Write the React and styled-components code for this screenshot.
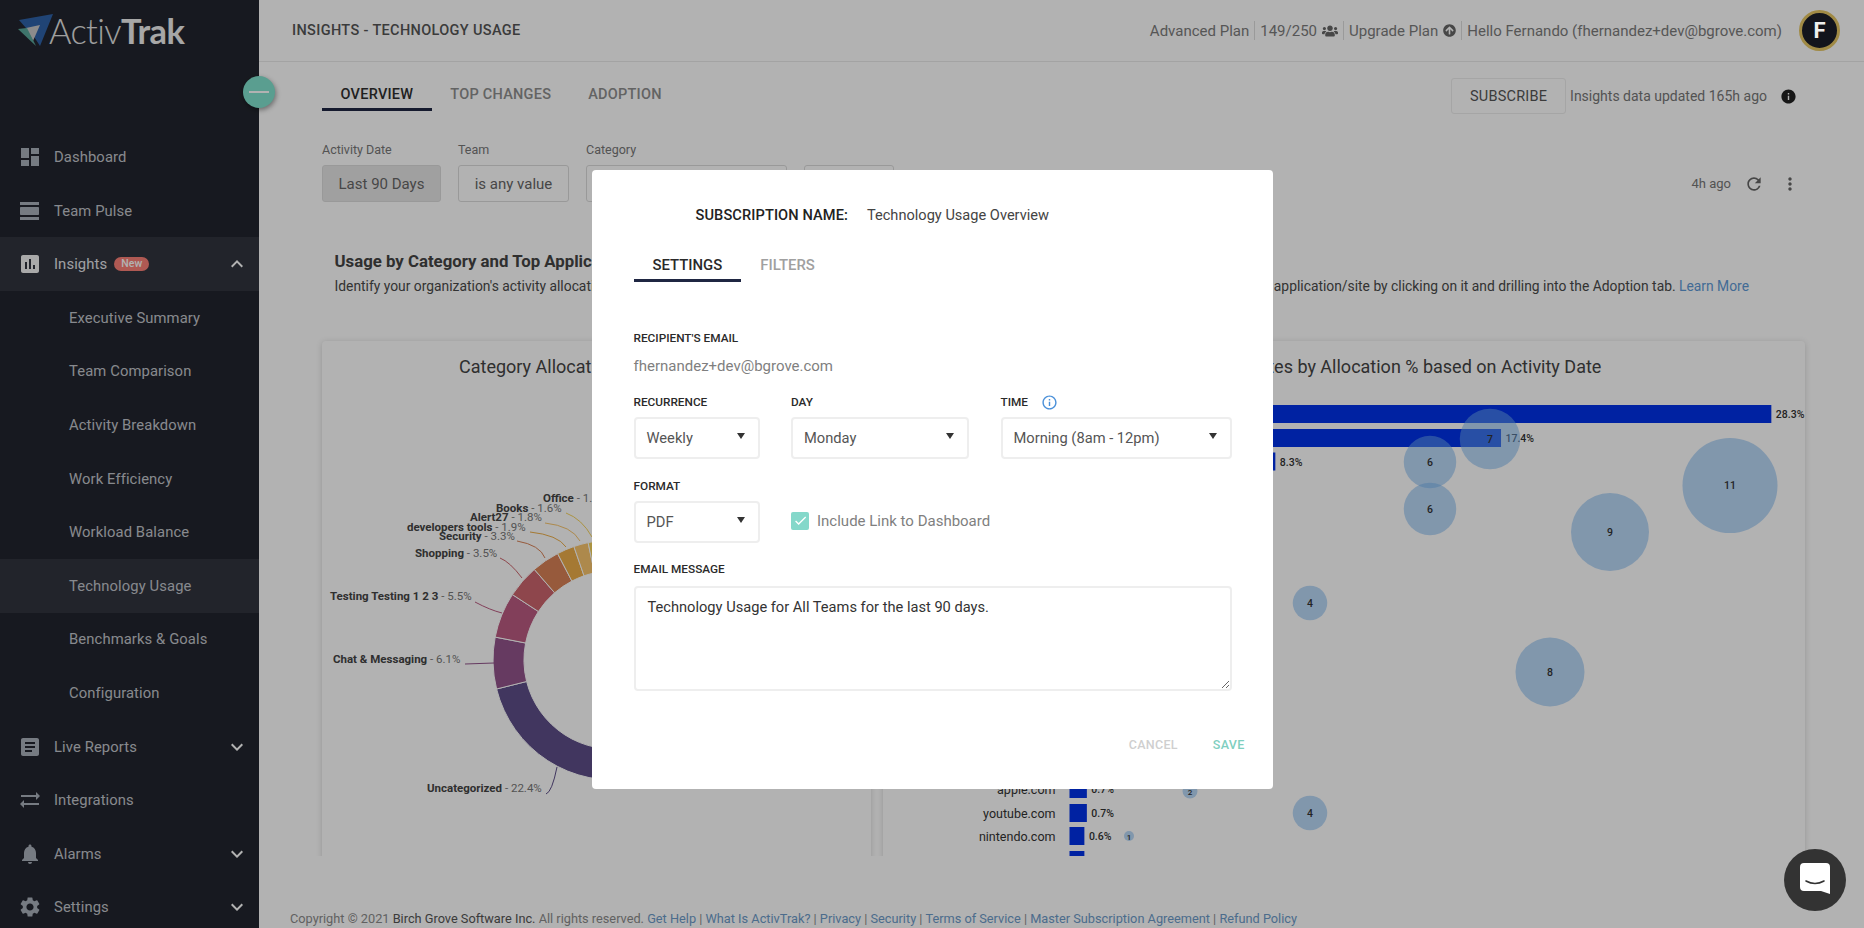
import React from 'react';
import styled, { createGlobalStyle } from 'styled-components';
import {
  MdDashboard, MdViewDay, MdInsertChart, MdArticle, MdSyncAlt, MdNotifications, MdSettings,
  MdExpandLess, MdExpandMore, MdInfo, MdRefresh, MdMoreVert, MdInfoOutline, MdCheck,
} from 'react-icons/md';
import { FaUsers, FaArrowCircleUp } from 'react-icons/fa';

const GlobalStyle = createGlobalStyle`
  html, body { margin: 0; height: 100%; overflow: hidden; }
  body { font-family: Roboto, "Liberation Sans", sans-serif; background: #fff; }
  * { box-sizing: border-box; }
`;

const Page = styled.div`
  display: flex;
  height: 928px;
  overflow: hidden;
`;

const Sidebar = styled.aside`
  position: relative;
  flex: 0 0 259px;
  background: #22252e;
  overflow: visible;
`;

const LogoWrap = styled.div`
  display: flex;
  align-items: flex-start;
  height: 130.25px;
  padding: 9px 0 0 18px;
`;

const LogoMark = styled.svg`
  width: 36px;
  height: 34px;
  margin-top: 4px;
  flex: none;
`;

const LogoText = styled.div`
  margin: 0 0 0 -5px;
  font-family: Lato, Roboto, sans-serif;
  font-size: 34.4px;
  line-height: 44px;
  letter-spacing: -0.6px;
  font-weight: 300;
  color: #e4e4e4;
  b { font-weight: 700; color: #f0f0f0; }
`;

const Toggle = styled.div`
  position: absolute;
  top: 76px;
  right: -16px;
  width: 32px;
  height: 32px;
  border-radius: 50%;
  background: #81e2ce;
  box-shadow: 1px 2px 5px rgba(0, 0, 0, 0.4);
  display: flex;
  align-items: center;
  justify-content: center;
  z-index: 2;
  &::after {
    content: '';
    width: 20px;
    height: 2px;
    background: #fff;
  }
`;

const NavItem = styled.div`
  display: flex;
  align-items: center;
  height: 53.6px;
  padding: 0 10px 0 ${(p) => (p.$sub ? '69px' : '20px')};
  background: ${(p) => (p.$active ? '#31343e' : 'transparent')};
  color: ${(p) => (p.$bright ? '#e4e6ea' : '#c2c5cc')};
  font-size: 14.8px;
  letter-spacing: 0.1px;
  svg { flex: none; }
`;

const NavIcon = styled.span`
  display: flex;
  width: 34px;
  margin-left: -2px;
  margin-right: 2px;
  font-size: 24px;
  color: ${(p) => (p.$bright ? '#f2f2f2' : '#aab0bb')};
`;

const NewBadge = styled.span`
  margin-left: 7px;
  padding: 0 7px;
  height: 14px;
  line-height: 14px;
  border-radius: 7px;
  background: #fb8077;
  color: #fff;
  font-size: 10.5px;
  font-weight: 500;
`;

const Chevron = styled.span`
  display: flex;
  margin-left: auto;
  font-size: 24px;
  color: #fff;
`;

const Main = styled.main`
  flex: 1;
  min-width: 0;
  display: flex;
  flex-direction: column;
  background: #fff;
`;

const Header = styled.header`
  display: flex;
  align-items: center;
  height: 62px;
  padding: 0 24px 0 33px;
  border-bottom: 1px solid #eaeaea;
`;

const PageTitle = styled.div`
  font-size: 14.5px;
  font-weight: 500;
  color: #555;
  letter-spacing: 0.35px;
`;

const HeaderRight = styled.div`
  margin-left: auto;
  display: flex;
  align-items: center;
  font-size: 15px;
  color: #7c7c7c;
`;

const HeaderCell = styled.span`
  display: flex;
  align-items: center;
  gap: 5px;
  height: 19px;
  padding: 0 5px;
  border-left: ${(p) => (p.$first ? 'none' : '1px solid #ddd')};
  svg { font-size: ${(p) => p.$icon || 14}px; color: #666; }
`;

const Avatar = styled.div`
  position: relative;
  z-index: 30;
  margin-left: 12px;
  width: 41px;
  height: 41px;
  border-radius: 50%;
  border: 3px solid #a08a45;
  background: #12141c;
  color: #eee;
  display: flex;
  align-items: center;
  justify-content: center;
  font-size: 22px;
  font-weight: 700;
`;

const Content = styled.div`
  padding: 16px 59px 0 63px;
`;

const TabsRow = styled.div`
  display: flex;
  align-items: flex-start;
  height: 36px;
`;

const Tab = styled.div`
  height: 33px;
  padding: 0 18.5px;
  line-height: 33px;
  font-size: 14.5px;
  font-weight: 500;
  letter-spacing: 0.25px;
  color: ${(p) => (p.$active ? '#2f2f2f' : '#8e8e8e')};
  border-bottom: 3px solid ${(p) => (p.$active ? '#1f2642' : 'transparent')};
`;

const SubscribeWrap = styled.div`
  margin-left: auto;
  display: flex;
  align-items: center;
  gap: 4px;
  padding-right: 8.5px;
  font-size: 14px;
  color: #777;
  svg { margin-left: 8.5px; font-size: 17px; color: #222; }
`;

const SubscribeButton = styled.div`
  width: 115px;
  height: 36px;
  display: flex;
  align-items: center;
  justify-content: center;
  border: 1px solid #ececec;
  border-radius: 3px;
  font-size: 14.5px;
  letter-spacing: 0.2px;
  color: #555;
`;

const FilterRow = styled.div`
  display: flex;
  align-items: flex-end;
  gap: 17px;
  margin-top: 29px;
`;

const FilterGroup = styled.div`
  display: flex;
  flex-direction: column;
  gap: 8px;
`;

const FilterLabel = styled.div`
  font-size: 12.5px;
  line-height: 14px;
  color: #777;
`;

const Chip = styled.div`
  width: ${(p) => p.$w}px;
  height: 37px;
  display: flex;
  align-items: center;
  justify-content: center;
  font-size: 15px;
  color: #666;
  border: 1px solid #dcdcdc;
  border-radius: 3px;
  background: ${(p) => (p.$on ? '#e6e6e6' : '#fff')};
`;

const FilterTools = styled.div`
  margin-left: auto;
  height: 37px;
  display: flex;
  align-items: center;
  padding-right: 5px;
  font-size: 13px;
  color: #777;
  svg { font-size: 20px; color: #666; }
`;

const ToolGap = styled.span`
  display: flex;
  margin-left: ${(p) => p.$gap}px;
`;

const SectionTitle = styled.h2`
  margin: 49px 0 0 12.5px;
  font-size: 16.8px;
  line-height: 20px;
  font-weight: 700;
  color: #444;
`;

const SectionDesc = styled.div`
  display: flex;
  justify-content: space-between;
  margin: 6px 56px 0 12.5px;
  font-size: 13.85px;
  line-height: 18px;
  color: #4a4a4a;
  a { color: #5f9ad6; text-decoration: none; }
`;

const CardsClip = styled.div`
  display: grid;
  grid-template-columns: 549px 922px;
  gap: 12px;
  height: 523px;
  margin: 38px -8px 0 -8px;
  padding: 8px 8px 0;
  overflow: hidden;
`;

const Card = styled.section`
  background: #fff;
  border-radius: 4px;
  box-shadow: 0 1px 6px rgba(0, 0, 0, 0.16);
  height: 530px;
`;

const CardTitle = styled.h3`
  margin: 0;
  padding: 15px 0 0 ${(p) => p.$inset || 0}px;
  text-align: center;
  font-size: 18px;
  line-height: 22px;
  font-weight: 400;
  color: #444;
`;

const ChartSvg = styled.svg`
  display: block;
`;

const LabelText = styled.text`
  font-family: Roboto, sans-serif;
  font-size: 11.5px;
  font-weight: 700;
  fill: #444;
  tspan { font-weight: 400; fill: #777; }
`;

const BarText = styled.text`
  font-family: Roboto, sans-serif;
  font-size: ${(p) => p.$size || 10.5}px;
  font-weight: ${(p) => p.$weight || 500};
  fill: #333;
`;

const Footer = styled.footer`
  margin-top: auto;
  padding-left: 31px;
  line-height: 18px;
  font-size: 12.75px;
  color: #8c8c8c;
  white-space: nowrap;
  b { font-weight: 400; color: #555; }
  a { color: #6d9bc9; text-decoration: none; }
`;

const Overlay = styled.div`
  position: fixed;
  inset: 0;
  z-index: 10;
  display: flex;
  justify-content: center;
  align-items: flex-start;
  padding-top: 170px;
  background: rgba(0, 0, 0, 0.3);
`;

const Modal = styled.div`
  width: 681px;
  height: 619px;
  padding: 35px 28px 0 42px;
  background: #fff;
  border-radius: 4px;
  display: flex;
  flex-direction: column;
`;

const NameRow = styled.div`
  display: flex;
  align-items: center;
  gap: 19px;
  height: 20px;
  padding-left: 62px;
  font-size: 14.6px;
  color: #444;
  strong { font-weight: 500; color: #222; letter-spacing: 0.1px; }
`;

const ModalTabs = styled.div`
  display: flex;
  margin-top: 24px;
`;

const ModalTab = styled.div`
  height: 33px;
  padding: 0 19px;
  line-height: 33px;
  font-size: 14.9px;
  font-weight: 500;
  color: ${(p) => (p.$active ? '#2a2a2a' : '#a0a0a0')};
  border-bottom: 3px solid ${(p) => (p.$active ? '#1f2642' : 'transparent')};
`;

const FieldLabel = styled.label`
  display: flex;
  align-items: center;
  gap: 13px;
  height: 14px;
  margin-top: ${(p) => p.$top || 0}px;
  font-size: 11.8px;
  font-weight: 500;
  line-height: 14px;
  color: #2a2a2a;
  svg { font-size: 17px; color: #4a90d9; }
`;

const EmailValue = styled.div`
  margin-top: 11px;
  line-height: 20px;
  font-size: 15px;
  color: #7f7f7f;
`;

const SelectGrid = styled.div`
  display: grid;
  grid-template-columns: 126px 178px 231px;
  column-gap: 31.5px;
  row-gap: 8px;
  margin-top: ${(p) => p.$top}px;
`;

const SelectBox = styled.div`
  position: relative;
  height: 42px;
  padding-left: 11px;
  display: flex;
  align-items: center;
  font-size: 14.7px;
  color: #555;
  border: 2px solid #eee;
  border-radius: 4px;
  &::after {
    content: '';
    position: absolute;
    right: 13px;
    top: 14px;
    border-left: 4px solid transparent;
    border-right: 4px solid transparent;
    border-top: 6px solid #333;
  }
`;

const CheckRow = styled.div`
  grid-column: span 2;
  display: flex;
  align-items: center;
  gap: 8px;
  padding-bottom: 3px;
  font-size: 15px;
  color: #7f7f7f;
  white-space: nowrap;
`;

const CheckBox = styled.span`
  width: 18px;
  height: 18px;
  display: flex;
  align-items: center;
  justify-content: center;
  border-radius: 2px;
  background: #84d8ca;
  color: #fff;
  font-size: 15px;
`;

const MessageField = styled.textarea`
  display: block;
  width: 598px;
  height: 105px;
  margin-top: 10px;
  padding: 9px 12px;
  border: 2px solid #eee;
  border-radius: 4px;
  outline: none;
  font-family: Roboto, sans-serif;
  font-size: 14.65px;
  line-height: 20px;
  color: #333;
`;

const ModalActions = styled.div`
  display: flex;
  justify-content: flex-end;
  gap: 35px;
  margin-top: 46px;
`;

const ActionText = styled.span`
  font-size: 12.5px;
  line-height: 16px;
  font-weight: 500;
  letter-spacing: 0.3px;
  color: ${(p) => (p.$primary ? '#7fcfc0' : '#cfcfcf')};
`;

const ChatBubble = styled.div`
  position: fixed;
  right: 18px;
  bottom: 17px;
  z-index: 20;
  width: 62px;
  height: 62px;
  border-radius: 50%;
  background: #333;
  svg { display: block; }
`;

const Mark = () => (
  <LogoMark viewBox="0 0 36 34">
    <polygon points="1,7 35,1 22,33 13,19 8,15" fill="#2f62a8" />
    <polygon points="8,15 22,12 15,28" fill="#c9c9c9" />
    <polygon points="0,16 9,15 18,33" fill="#5aa79a" />
  </LogoMark>
);

// ring geometry, angles from the left going clockwise
const CX = 613;
const CY = 660;
const R = 120;
const RI = 89;
const pt = (a, r) => {
  const t = (a * Math.PI) / 180;
  return `${(CX - r * Math.cos(t)).toFixed(1)} ${(CY - r * Math.sin(t)).toFixed(1)}`;
};
const arc = (a1, a2) =>
  `M${pt(a1, R)} A${R} ${R} 0 ${a2 - a1 > 180 ? 1 : 0} 1 ${pt(a2, R)} L${pt(a2, RI)} A${RI} ${RI} 0 ${a2 - a1 > 180 ? 1 : 0} 0 ${pt(a1, RI)} Z`;

const slices = [
  { from: -100, to: -14, color: '#5d4e89' },
  { from: -14, to: 11, color: '#92538b' },
  { from: 11, to: 33, color: '#bb5b81' },
  { from: 33, to: 49, color: '#cc656d' },
  { from: 49, to: 62.5, color: '#d98257' },
  { from: 62.5, to: 71, color: '#edae49' },
  { from: 71, to: 78, color: '#f8c56d' },
  { from: 78, to: 86, color: '#f5d35e' },
];

const labels = [
  { name: 'Office', pct: '1.5%', x: 543, y: 502 },
  { name: 'Books', pct: '1.6%', x: 496, y: 512 },
  { name: 'Alert27', pct: '1.8%', x: 470, y: 521 },
  { name: 'developers tools', pct: '1.9%', x: 407, y: 531 },
  { name: 'Security', pct: '3.3%', x: 439, y: 540 },
  { name: 'Shopping', pct: '3.5%', x: 415, y: 557 },
  { name: 'Testing Testing 1 2 3', pct: '5.5%', x: 330, y: 600 },
  { name: 'Chat & Messaging', pct: '6.1%', x: 333, y: 663 },
  { name: 'Uncategorized', pct: '22.4%', x: 427, y: 792 },
];

const leaders = [
  { d: 'M566 513 Q582 519 592 537', color: '#f5d35e' },
  { d: 'M545 523 Q572 526 580 541', color: '#f8c56d' },
  { d: 'M530 532 Q558 535 566 547', color: '#edae49' },
  { d: 'M517 541 Q540 545 545 558', color: '#d98257' },
  { d: 'M500 558 Q510 562 522 578', color: '#cc656d' },
  { d: 'M475 602 Q490 610 502 613', color: '#bb5b81' },
  { d: 'M465 664 L494 663', color: '#92538b' },
  { d: 'M546 794 Q552 792 557 767', color: '#5d4e89' },
];

const BAR_X = 1069.5;
const PX_PER_PCT = 24.8;
const bars = [
  { pct: 28.3, y: 414 },
  { pct: 17.4, y: 438 },
  { pct: 8.3, y: 461.5 },
  { pct: 0.7, y: 789, name: 'apple.com' },
  { pct: 0.7, y: 813, name: 'youtube.com' },
  { pct: 0.6, y: 836, name: 'nintendo.com' },
  { pct: 0.6, y: 860 },
];

const bubbles = [
  { n: 11, x: 1730, y: 485.5, d: 95 },
  { n: 9, x: 1610, y: 532, d: 78 },
  { n: 8, x: 1550, y: 672, d: 69 },
  { n: 7, x: 1490, y: 439, d: 60.5 },
  { n: 6, x: 1430, y: 462, d: 52.5 },
  { n: 6, x: 1430, y: 509, d: 52.5 },
  { n: 4, x: 1310, y: 603, d: 34.5 },
  { n: 4, x: 1310, y: 813, d: 34.5 },
  { n: 2, x: 1190, y: 791, d: 15 },
  { n: 1, x: 1129, y: 836, d: 10 },
];

const subItems = [
  'Executive Summary', 'Team Comparison', 'Activity Breakdown', 'Work Efficiency',
  'Workload Balance', 'Technology Usage', 'Benchmarks & Goals', 'Configuration',
];

export default function App() {
  return (
    <>
      <GlobalStyle />
      <Page>
        <Sidebar>
          <LogoWrap>
            <Mark />
            <LogoText>Activ<b>Trak</b></LogoText>
          </LogoWrap>
          <Toggle />
          <NavItem><NavIcon><MdDashboard /></NavIcon>Dashboard</NavItem>
          <NavItem><NavIcon><MdViewDay /></NavIcon>Team Pulse</NavItem>
          <NavItem $active $bright>
            <NavIcon $bright><MdInsertChart /></NavIcon>Insights<NewBadge>New</NewBadge>
            <Chevron><MdExpandLess /></Chevron>
          </NavItem>
          {subItems.map((s) => (
            <NavItem key={s} $sub $active={s === 'Technology Usage'}>{s}</NavItem>
          ))}
          <NavItem><NavIcon><MdArticle /></NavIcon>Live Reports<Chevron><MdExpandMore /></Chevron></NavItem>
          <NavItem><NavIcon><MdSyncAlt /></NavIcon>Integrations</NavItem>
          <NavItem><NavIcon><MdNotifications /></NavIcon>Alarms<Chevron><MdExpandMore /></Chevron></NavItem>
          <NavItem><NavIcon><MdSettings /></NavIcon>Settings<Chevron><MdExpandMore /></Chevron></NavItem>
        </Sidebar>

        <Main>
          <Header>
            <PageTitle>INSIGHTS - TECHNOLOGY USAGE</PageTitle>
            <HeaderRight>
              <HeaderCell $first>Advanced Plan</HeaderCell>
              <HeaderCell $icon={16}>149/250 <FaUsers /></HeaderCell>
              <HeaderCell $icon={13}>Upgrade Plan <FaArrowCircleUp /></HeaderCell>
              <HeaderCell>Hello Fernando (fhernandez+dev@bgrove.com)</HeaderCell>
              <Avatar>F</Avatar>
            </HeaderRight>
          </Header>

          <Content>
            <TabsRow>
              <Tab $active>OVERVIEW</Tab>
              <Tab>TOP CHANGES</Tab>
              <Tab>ADOPTION</Tab>
              <SubscribeWrap>
                <SubscribeButton>SUBSCRIBE</SubscribeButton>
                Insights data updated 165h ago
                <MdInfo />
              </SubscribeWrap>
            </TabsRow>

            <FilterRow>
              <FilterGroup>
                <FilterLabel>Activity Date</FilterLabel>
                <Chip $w={119} $on>Last 90 Days</Chip>
              </FilterGroup>
              <FilterGroup>
                <FilterLabel>Team</FilterLabel>
                <Chip $w={111}>is any value</Chip>
              </FilterGroup>
              <FilterGroup>
                <FilterLabel>Category</FilterLabel>
                <Chip $w={201}>is any value</Chip>
              </FilterGroup>
              <Chip $w={90}>Clear</Chip>
              <FilterTools>
                4h ago
                <ToolGap $gap={13}><MdRefresh /></ToolGap>
                <ToolGap $gap={16}><MdMoreVert /></ToolGap>
              </FilterTools>
            </FilterRow>

            <SectionTitle>Usage by Category and Top Applications/Sites</SectionTitle>
            <SectionDesc>
              <span>Identify your organization's activity allocation</span>
              <span>application/site by clicking on it and drilling into the Adoption tab. <a href="#more">Learn More</a></span>
            </SectionDesc>

            <CardsClip>
              <Card>
                <CardTitle $inset={10}>Category Allocation by Activity Date</CardTitle>
                <ChartSvg width="549" height="478" viewBox="322 378 549 478">
                  {slices.map((s) => (
                    <path key={s.from} d={arc(s.from, s.to)} fill={s.color} stroke="#fff" strokeWidth="1" />
                  ))}
                  {leaders.map((l) => (
                    <path key={l.d} d={l.d} fill="none" stroke={l.color} strokeWidth="1" />
                  ))}
                  {labels.map((l) => (
                    <LabelText key={l.name} x={l.x} y={l.y}>
                      {l.name}<tspan> - {l.pct}</tspan>
                    </LabelText>
                  ))}
                </ChartSvg>
              </Card>
              <Card>
                <CardTitle>Top 10 Applications/Sites by Allocation % based on Activity Date</CardTitle>
                <ChartSvg width="922" height="478" viewBox="883 378 922 478">
                  {bars.map((b) => {
                    const w = b.pct * PX_PER_PCT;
                    return (
                      <g key={b.y}>
                        <rect x={BAR_X} y={b.y - 9} width={w} height="18" fill="#0031e9" />
                        {b.y < 850 && (
                          <BarText x={BAR_X + w + 4.5} y={b.y + 4}>{b.pct}%</BarText>
                        )}
                        {b.name && (
                          <BarText x={BAR_X - 14} y={b.y + 4.5} textAnchor="end" $size={12.5} $weight={400}>{b.name}</BarText>
                        )}
                      </g>
                    );
                  })}
                  {bubbles.map((b) => (
                    <g key={`${b.x}-${b.y}`}>
                      <circle cx={b.x} cy={b.y} r={b.d / 2} fill="#74b1ef" fillOpacity="0.5" />
                      <BarText x={b.x} y={b.y + 3.5} textAnchor="middle" $size={b.d < 16 ? 8 : 10.5}>{b.n}</BarText>
                    </g>
                  ))}
                </ChartSvg>
              </Card>
            </CardsClip>
          </Content>

          <Footer>
            Copyright © 2021 <b>Birch Grove Software Inc.</b> All rights reserved.{' '}
            <a href="#help">Get Help</a> | <a href="#what">What Is ActivTrak?</a> | <a href="#privacy">Privacy</a> |{' '}
            <a href="#security">Security</a> | <a href="#terms">Terms of Service</a> |{' '}
            <a href="#msa">Master Subscription Agreement</a> | <a href="#refund">Refund Policy</a>
          </Footer>
        </Main>
      </Page>

      <Overlay>
        <Modal>
          <NameRow>
            <strong>SUBSCRIPTION NAME:</strong>
            Technology Usage Overview
          </NameRow>
          <ModalTabs>
            <ModalTab $active>SETTINGS</ModalTab>
            <ModalTab>FILTERS</ModalTab>
          </ModalTabs>

          <FieldLabel $top={49}>RECIPIENT'S EMAIL</FieldLabel>
          <EmailValue>fhernandez+dev@bgrove.com</EmailValue>

          <SelectGrid $top={19}>
            <FieldLabel>RECURRENCE</FieldLabel>
            <FieldLabel>DAY</FieldLabel>
            <FieldLabel>TIME <MdInfoOutline /></FieldLabel>
            <SelectBox>Weekly</SelectBox>
            <SelectBox>Monday</SelectBox>
            <SelectBox>Morning (8am - 12pm)</SelectBox>
          </SelectGrid>

          <SelectGrid $top={20}>
            <FieldLabel>FORMAT</FieldLabel>
            <span />
            <span />
            <SelectBox>PDF</SelectBox>
            <CheckRow><CheckBox><MdCheck /></CheckBox>Include Link to Dashboard</CheckRow>
          </SelectGrid>

          <FieldLabel $top={19}>EMAIL MESSAGE</FieldLabel>
          <MessageField defaultValue="Technology Usage for All Teams for the last 90 days." />

          <ModalActions>
            <ActionText>CANCEL</ActionText>
            <ActionText $primary>SAVE</ActionText>
          </ModalActions>
        </Modal>
      </Overlay>

      <ChatBubble>
        <svg width="62" height="62" viewBox="0 0 62 62">
          <path d="M20 14h22a4 4 0 0 1 4 4v27l-9-3H20a4 4 0 0 1-4-4V18a4 4 0 0 1 4-4z" fill="#fff" />
          <path d="M22 32q9 5 18 0" fill="none" stroke="#333" strokeWidth="1.6" strokeLinecap="round" />
        </svg>
      </ChatBubble>
    </>
  );
}
